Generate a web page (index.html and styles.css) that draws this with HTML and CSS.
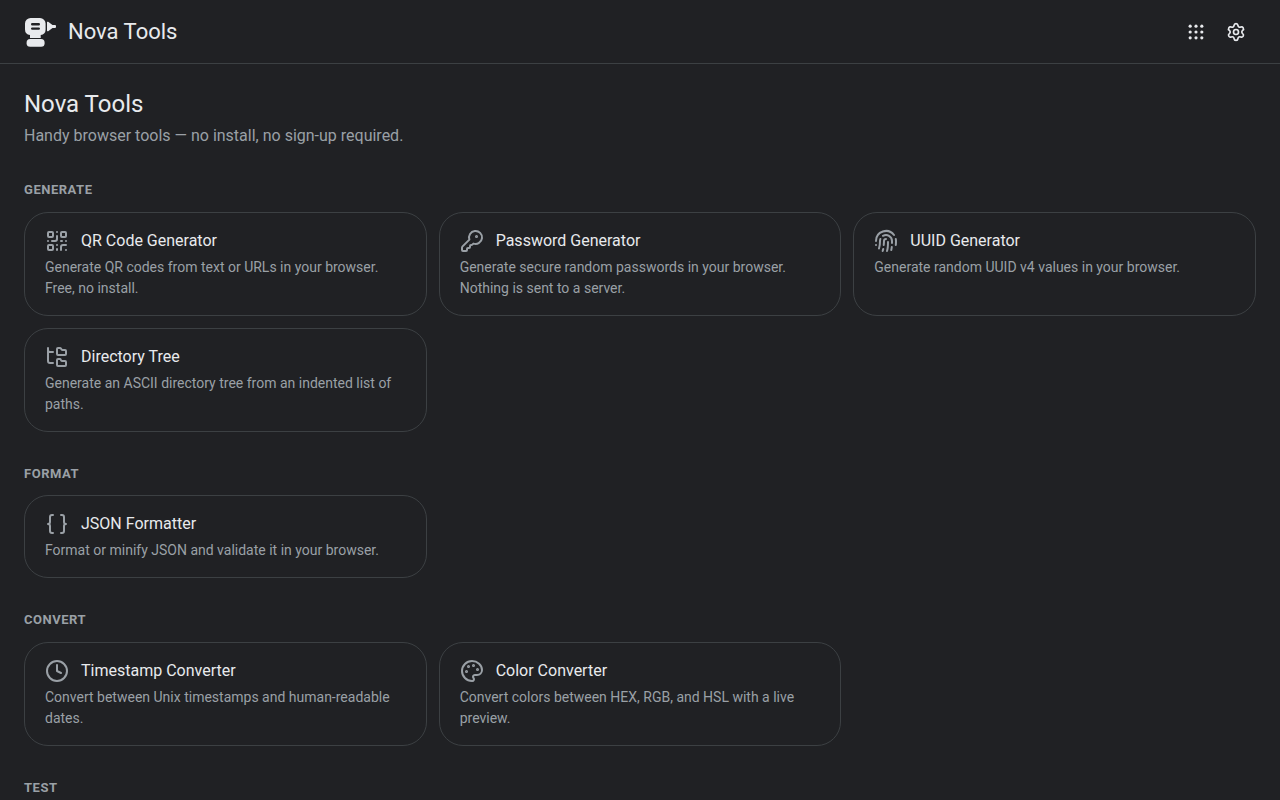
FILE: index.html
```html
<!DOCTYPE html>
<html lang="en">
    <head>
        <meta charset="utf-8">
        <meta name="viewport" content="width=device-width, initial-scale=1">
        <title>Nova Tools</title>
        <link rel="stylesheet" href="styles.css">
    </head>
    <body>
        <header class="topbar">
            <a class="brand" href="#">
                <svg class="brand-logo" viewBox="0 0 32 32" fill="currentColor" aria-hidden="true">
                    <path fill-rule="evenodd" d="M7 2h9a5.6 5.6 0 0 1 5.6 5.6v5.8a5.6 5.6 0 0 1-4.9 5.5v3H6v-3a5.6 5.6 0 0 1-5-5.5V7.600a5.600 5.600 0 0 1 6-5.600zM8.200 7a1.200 1.200 0 0 0 0 2.400h6.600a1.200 1.200 0 0 0 0-2.400zM8.200 11.400a1.200 1.200 0 0 0 0 2.400h6.600a1.200 1.200 0 0 0 0-2.400z"/>
                    <path d="M23 6.500a.8.8 0 0 1 1.200-.7l4.300 3.100h2.500a1 1 0 0 1 1 1v1.200a1 1 0 0 1-1 1h-2.500l-4.300 3.100a.8.8 0 0 1-1.200-.7z"/>
                    <rect x="2.600" y="23" width="18" height="7.800" rx="3.500"/>
                </svg>
                <span class="brand-name">Nova Tools</span>
            </a>
            <div class="actions">
                <button class="icon-button" type="button" aria-label="Apps">
                    <svg viewBox="0 0 24 24" fill="currentColor">
                        <circle cx="5" cy="5" r="1.900"/><circle cx="12" cy="5" r="1.900"/><circle cx="19" cy="5" r="1.900"/>
                        <circle cx="5" cy="12" r="1.900"/><circle cx="12" cy="12" r="1.900"/><circle cx="19" cy="12" r="1.900"/>
                        <circle cx="5" cy="19" r="1.900"/><circle cx="12" cy="19" r="1.900"/><circle cx="19" cy="19" r="1.900"/>
                    </svg>
                </button>
                <button class="icon-button" type="button" aria-label="Settings">
                    <svg class="stroke" viewBox="0 0 24 24">
                        <path d="M9.671 4.136a2.34 2.34 0 0 1 4.659 0 2.34 2.34 0 0 0 3.319 1.915 2.34 2.34 0 0 1 2.33 4.033 2.34 2.34 0 0 0 0 3.831 2.34 2.34 0 0 1-2.33 4.033 2.34 2.34 0 0 0-3.319 1.915 2.34 2.34 0 0 1-4.659 0 2.34 2.34 0 0 0-3.32-1.915 2.34 2.34 0 0 1-2.33-4.033 2.34 2.34 0 0 0 0-3.831A2.34 2.34 0 0 1 6.35 6.051a2.34 2.34 0 0 0 3.319-1.915"/>
                        <circle cx="12" cy="12" r="3"/>
                    </svg>
                </button>
            </div>
        </header>

        <main class="content">
            <h1>Nova Tools</h1>
            <p class="lead">Handy browser tools — no install, no sign-up required.</p>

            <section class="group">
                <h2>Generate</h2>
                <div class="cards">
                    <a class="card" href="#qr-code">
                        <span class="card-head">
                            <svg class="stroke" viewBox="0 0 24 24">
                                <rect width="5" height="5" x="3" y="3" rx="1"/><rect width="5" height="5" x="16" y="3" rx="1"/><rect width="5" height="5" x="3" y="16" rx="1"/>
                                <path d="M21 16h-3a2 2 0 0 0-2 2v3M21 21v.01M12 7v3a2 2 0 0 1-2 2H7M3 12h.01M12 3h.01M12 16v.01M16 12h1M21 12v.01M12 21v-1"/>
                            </svg>
                            <span class="card-title">QR Code Generator</span>
                        </span>
                        <span class="card-text">Generate QR codes from text or URLs in your browser. Free, no install.</span>
                    </a>
                    <a class="card" href="#password">
                        <span class="card-head">
                            <svg class="stroke" viewBox="0 0 24 24">
                                <path d="M2.586 17.414A2 2 0 0 0 2 18.828V21a1 1 0 0 0 1 1h3a1 1 0 0 0 1-1v-1a1 1 0 0 1 1-1h1a1 1 0 0 0 1-1v-1a1 1 0 0 1 1-1h.172a2 2 0 0 0 1.414-.586l.814-.814a6.5 6.5 0 1 0-4-4z"/>
                                <circle cx="16.5" cy="7.5" r=".5" fill="currentColor"/>
                            </svg>
                            <span class="card-title">Password Generator</span>
                        </span>
                        <span class="card-text">Generate secure random passwords in your browser. Nothing is sent to a server.</span>
                    </a>
                    <a class="card" href="#uuid">
                        <span class="card-head">
                            <svg class="stroke" viewBox="0 0 24 24">
                                <path d="M12 10a2 2 0 0 0-2 2c0 1.02-.1 2.51-.26 4M14 13.12c0 2.38 0 6.38-1 8.88M17.29 21.02c.12-.6.43-2.3.5-3.02M2 12a10 10 0 0 1 18-6M2 16h.01M21.8 16c.2-2 .131-5.354 0-6M5 19.5C5.5 18 6 15 6 12a6 6 0 0 1 .34-2M8.65 22c.21-.66.45-1.32.57-2M9 6.8a6 6 0 0 1 9 5.2v2"/>
                            </svg>
                            <span class="card-title">UUID Generator</span>
                        </span>
                        <span class="card-text">Generate random UUID v4 values in your browser.</span>
                    </a>
                    <a class="card" href="#directory-tree">
                        <span class="card-head">
                            <svg class="stroke" viewBox="0 0 24 24">
                                <path d="M20 10a1 1 0 0 0 1-1V6a1 1 0 0 0-1-1h-2.5a1 1 0 0 1-.8-.4l-.9-1.2A1 1 0 0 0 15 3h-2a1 1 0 0 0-1 1v5a1 1 0 0 0 1 1Z"/>
                                <path d="M20 21a1 1 0 0 0 1-1v-3a1 1 0 0 0-1-1h-2.9a1 1 0 0 1-.88-.55l-.42-.85a1 1 0 0 0-.92-.6H13a1 1 0 0 0-1 1v5a1 1 0 0 0 1 1Z"/>
                                <path d="M3 5a2 2 0 0 0 2 2h3M3 3v13a2 2 0 0 0 2 2h3"/>
                            </svg>
                            <span class="card-title">Directory Tree</span>
                        </span>
                        <span class="card-text">Generate an ASCII directory tree from an indented list of paths.</span>
                    </a>
                </div>
            </section>

            <section class="group">
                <h2>Format</h2>
                <div class="cards">
                    <a class="card" href="#json">
                        <span class="card-head">
                            <svg class="stroke" viewBox="0 0 24 24">
                                <path d="M8 3H7a2 2 0 0 0-2 2v5a2 2 0 0 1-2 2 2 2 0 0 1 2 2v5c0 1.1.9 2 2 2h1M16 21h1a2 2 0 0 0 2-2v-5c0-1.1.9-2 2-2a2 2 0 0 1-2-2V5a2 2 0 0 0-2-2h-1"/>
                            </svg>
                            <span class="card-title">JSON Formatter</span>
                        </span>
                        <span class="card-text">Format or minify JSON and validate it in your browser.</span>
                    </a>
                </div>
            </section>

            <section class="group">
                <h2>Convert</h2>
                <div class="cards">
                    <a class="card" href="#timestamp">
                        <span class="card-head">
                            <svg class="stroke" viewBox="0 0 24 24">
                                <circle cx="12" cy="12" r="10"/>
                                <path d="M12 6v6l4 2"/>
                            </svg>
                            <span class="card-title">Timestamp Converter</span>
                        </span>
                        <span class="card-text">Convert between Unix timestamps and human-readable dates.</span>
                    </a>
                    <a class="card" href="#color">
                        <span class="card-head">
                            <svg class="stroke" viewBox="0 0 24 24">
                                <path d="M12 22a1 1 0 0 1 0-20 10 9 0 0 1 10 9 5 5 0 0 1-5 5h-2.25a1.75 1.75 0 0 0-1.4 2.8l.3.4a1.75 1.75 0 0 1-1.4 2.8z"/>
                                <circle cx="13.5" cy="6.5" r=".5" fill="currentColor"/><circle cx="17.5" cy="10.5" r=".5" fill="currentColor"/>
                                <circle cx="6.5" cy="12.5" r=".5" fill="currentColor"/><circle cx="8.5" cy="7.5" r=".5" fill="currentColor"/>
                            </svg>
                            <span class="card-title">Color Converter</span>
                        </span>
                        <span class="card-text">Convert colors between HEX, RGB, and HSL with a live preview.</span>
                    </a>
                </div>
            </section>

            <section class="group">
                <h2>Test</h2>
            </section>
        </main>
    </body>
</html>
```

FILE: styles.css
```css
* {
    box-sizing: border-box;
}

body {
    margin: 0;
    background: #202124;
    color: #e8eaed;
    font-family: Roboto, "Liberation Sans", sans-serif;
    font-size: 16px;
    line-height: 1.5;
}

h1,
h2,
p {
    margin: 0;
}

a {
    color: inherit;
    text-decoration: none;
}

.stroke {
    fill: none;
    stroke: currentColor;
    stroke-width: 2;
    stroke-linecap: round;
    stroke-linejoin: round;
}

/* header */
.topbar {
    display: flex;
    align-items: center;
    justify-content: space-between;
    height: 64px;
    padding: 0 24px;
    border-bottom: 1px solid #3c4043;
}

.brand {
    display: flex;
    align-items: center;
    gap: 12px;
}

.brand-logo {
    width: 32px;
    height: 32px;
}

.brand-name {
    font-size: 22px;
    line-height: 28px;
}

.actions {
    display: flex;
}

.icon-button {
    display: flex;
    align-items: center;
    justify-content: center;
    width: 40px;
    height: 40px;
    padding: 0;
    border: 0;
    border-radius: 50%;
    background: none;
    color: inherit;
    cursor: pointer;
}

.icon-button svg {
    width: 20px;
    height: 20px;
}

/* tool list */
.content {
    padding: 24px 24px 0;
}

h1 {
    margin-bottom: 4px;
    font-size: 24px;
    font-weight: 400;
    line-height: 32px;
}

.lead {
    color: #9aa0a6;
}

.group {
    margin-top: 32px;
}

h2 {
    color: #9aa0a6;
    font-size: 13px;
    font-weight: 700;
    letter-spacing: 0.04em;
    text-transform: uppercase;
}

.cards {
    display: grid;
    grid-template-columns: repeat(auto-fill, minmax(320px, 1fr));
    gap: 12px;
    margin-top: 12px;
}

.card {
    display: flex;
    flex-direction: column;
    gap: 4px;
    padding: 16px 20px;
    border: 1px solid #3c4043;
    border-radius: 24px;
}

.card:hover {
    background: #292a2d;
}

.card-head {
    display: flex;
    align-items: center;
    gap: 12px;
}

.card-head svg {
    flex: none;
    width: 24px;
    height: 24px;
    color: #9aa0a6;
}

.card-title {
    font-weight: 400;
}

.card-text {
    color: #9aa0a6;
    font-size: 14px;
}
```
